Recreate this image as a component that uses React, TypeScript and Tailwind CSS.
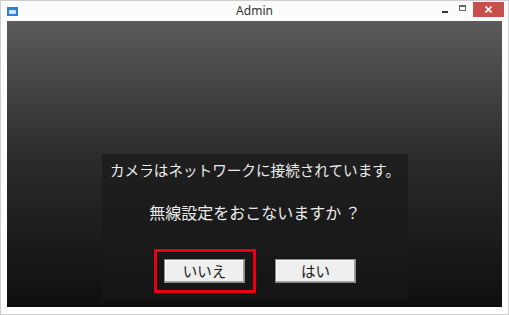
import React from 'react';

const JP = { fontFamily: '"Noto Sans CJK JP", "Noto Sans", sans-serif' };

// Small window chrome controls (min / max / close)
function TitleControls() {
  return (
    <div className="flex items-start h-full">
      <div className="w-[16px] h-[15px] flex items-center justify-center mr-[1px]">
        <div className="w-[6px] h-[2px] bg-[#333] mt-[6px]" />
      </div>
      <div className="w-[16px] h-[15px] flex items-start justify-center mr-[3px]">
        <div className="w-[7px] h-[6px] border border-[#666] border-t-2 mt-[4px]" />
      </div>
      <div className="w-[31px] h-[15px] bg-[#c7504d] flex items-center justify-center mt-[1px]">
        <svg width="7" height="7" viewBox="0 0 7 7">
          <path d="M0.5 0.5 L6.5 6.5 M6.5 0.5 L0.5 6.5" stroke="#fff" strokeWidth="1.6" />
        </svg>
      </div>
    </div>
  );
}

function WinButton({ label }: { label: string }) {
  return (
    <div
      className="w-[81px] h-[24px] bg-[#efefef] border border-[#8a8a8a] shadow-[inset_-1px_-1px_0_#a0a0a0,inset_1px_1px_0_#fff] flex items-center justify-center text-[14.5px] text-[#1a1a1a]"
      style={JP}
    >
      {label}
    </div>
  );
}

export default function App() {
  return (
    <div className="w-[509px] h-[315px] bg-white flex flex-col border border-[#cfcfcf] overflow-hidden">
      {/* Title bar */}
      <div className="h-[20px] grid grid-cols-[1fr_auto_1fr] items-start bg-[#fbfbfb]">
        <div className="ml-[6px] mt-[6px] w-[11px] h-[9px] bg-[#2f7fd6] flex items-center justify-center">
          <div className="w-[7px] h-[4px] bg-[#cfe6ff] rounded-[1px]" />
        </div>
        <div className="text-center text-[12px] leading-[20px] text-[#333]" style={{ fontFamily: '"Noto Sans", sans-serif' }}>
          Admin
        </div>
        <div className="mr-[4px] justify-self-end">
          <TitleControls />
        </div>
      </div>

      {/* Client area */}
      <div className="mx-[6px] h-[286px] bg-gradient-to-b from-[#5b5b5b] via-[#2a2a2a] to-[#0f0f0f] flex flex-col">
        <div className="mt-[133px] ml-[95px] w-[306px] h-[146px] bg-gradient-to-b from-[#1f1f1f] to-[#151515] flex flex-col items-center">
          <div className="mt-[5px] text-[14.6px] leading-[22px] text-[#ececec]" style={JP}>
            カメラはネットワークに接続されています。
          </div>
          <div className="mt-[20px] text-[16px] leading-[22px] text-[#ececec]" style={JP}>
            無線設定をおこないますか ？
          </div>
          <div className="self-start ml-[52px] mt-[26px] flex items-center">
            <div className="border-[3px] border-[#e60012] p-[7px] pr-[8px]">
              <WinButton label="いいえ" />
            </div>
            <div className="ml-[19px]">
              <WinButton label="はい" />
            </div>
          </div>
        </div>
      </div>
    </div>
  );
}
